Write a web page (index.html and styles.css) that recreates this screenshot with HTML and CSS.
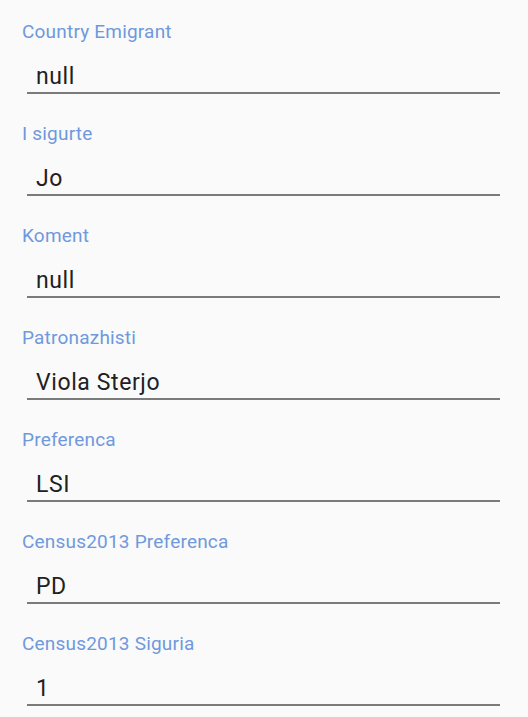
FILE: index.html
```html
<!DOCTYPE html>
<html lang="en">
<head>
    <meta charset="UTF-8">
    <title>Details</title>
    <link rel="stylesheet" href="styles.css">
</head>
<body>

<div class="form">
    <div class="field">
        <div class="field-label">Country Emigrant</div>
        <div class="field-value">null</div>
    </div>
    <div class="field">
        <div class="field-label">I sigurte</div>
        <div class="field-value">Jo</div>
    </div>
    <div class="field">
        <div class="field-label">Koment</div>
        <div class="field-value">null</div>
    </div>
    <div class="field">
        <div class="field-label">Patronazhisti</div>
        <div class="field-value">Viola Sterjo</div>
    </div>
    <div class="field">
        <div class="field-label">Preferenca</div>
        <div class="field-value">LSI</div>
    </div>
    <div class="field">
        <div class="field-label">Census2013 Preferenca</div>
        <div class="field-value">PD</div>
    </div>
    <div class="field">
        <div class="field-label">Census2013 Siguria</div>
        <div class="field-value">1</div>
    </div>
</div>

</body>
</html>
```

FILE: styles.css
```css
body {
    margin: 0;
    background-color: #fafafa;
    font-family: Roboto, "Noto Sans", sans-serif;
}

.form {
    display: flex;
    flex-direction: column;
    gap: 28px;
    padding: 20px 28px 0 22px;
}

.field {
    display: flex;
    flex-direction: column;
}

.field-label {
    font-size: 19px;
    line-height: 24px;
    letter-spacing: 0.2px;
    color: #6f99dc;
    margin-bottom: 19px;
}

.field-value {
    margin-left: 5px;
    padding: 0 0 1px 9px;
    font-size: 23px;
    line-height: 28px;
    letter-spacing: 0.6px;
    color: #212121;
    border-bottom: 2px solid #7b7b7b;
}
```
